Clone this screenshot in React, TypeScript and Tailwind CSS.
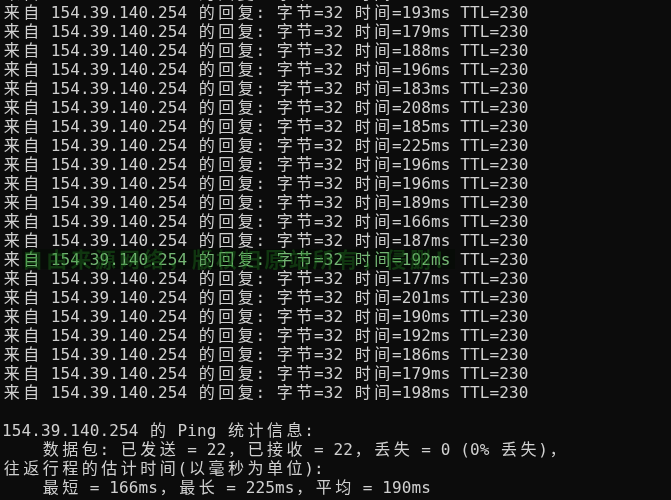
import React from "react";

const times = [178, 193, 179, 188, 196, 183, 208, 185, 225, 196, 196, 189, 166, 187, 192, 177, 201, 190, 192, 186, 179, 198];

const lines: string[] = [
  ...times.map((t) => `来自 154.39.140.254 的回复: 字节=32 时间=${t}ms TTL=230`),
  "",
  "154.39.140.254 的 Ping 统计信息:",
  "    数据包: 已发送 = 22，已接收 = 22，丢失 = 0 (0% 丢失)，",
  "往返行程的估计时间(以毫秒为单位):",
  "    最短 = 166ms，最长 = 225ms，平均 = 190ms",
];

const isWide = (c: string) => c.charCodeAt(0) > 0x2e80;

function Line({ text }: { text: string }) {
  return (
    <div className="flex h-[19px] items-center leading-[19px] whitespace-pre">
      {Array.from(text).map((c, i) =>
        isWide(c) ? (
          <span key={i} className="inline-block w-[19.5px] text-center">
            {c}
          </span>
        ) : (
          <span key={i} className="inline-block w-[9.76px]">
            {c}
          </span>
        )
      )}
    </div>
  );
}

export default function App() {
  return (
    <div className="relative h-[500px] w-[671px] overflow-hidden bg-[#0c0c0c] text-[16px] text-[#d0d0d0] [font-family:'DejaVu_Sans_Mono','Noto_Sans_CJK_SC',monospace]">
      <div className="mt-[-16.5px] pl-[2px]">
        {lines.map((l, i) => (
          <Line key={i} text={l} />
        ))}
      </div>
      <div className="absolute left-[22px] top-[249px] h-[20px] w-[433px] bg-[#8ee08e] mix-blend-multiply" />
      <div className="absolute left-[22px] top-[247px] flex h-[22px] w-[433px] items-center justify-between text-[21px] font-bold leading-[22px] text-[rgba(30,120,30,0.4)] [font-family:'Noto_Sans_CJK_SC',sans-serif]">
        {Array.from("自由来源网络，版权归原站所有，侵删！").map((c, i) => (
          <span key={i}>{c}</span>
        ))}
      </div>
    </div>
  );
}
